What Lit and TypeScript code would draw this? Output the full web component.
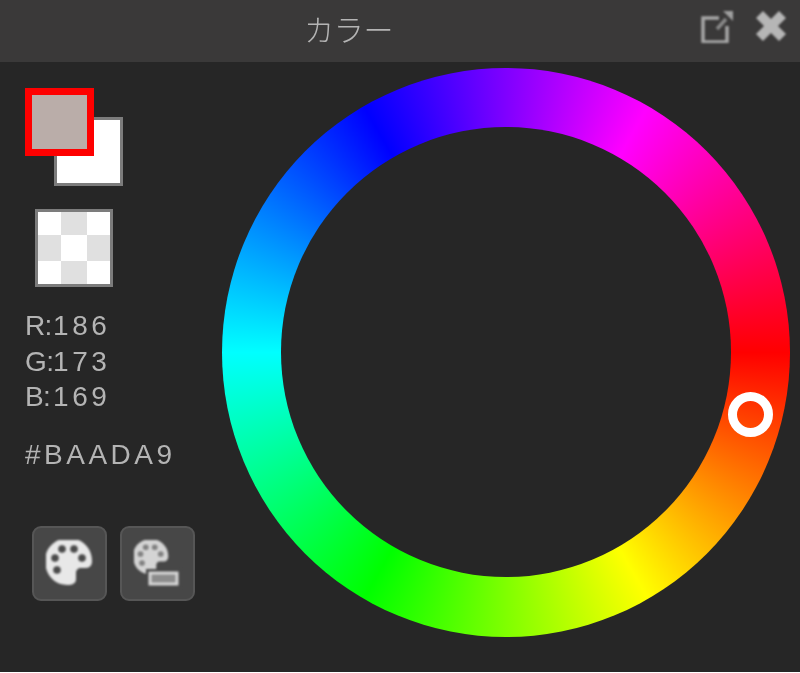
import { LitElement, html, css, svg } from "lit";
import { customElement } from "lit/decorators.js";

@customElement("app-root")
export class AppRoot extends LitElement {
  static styles = css`
    :host { display: block; width: 800px; height: 673px; background: #fff; overflow: hidden; }
    .panel { width: 800px; height: 672px; background: #262626; display: flex; flex-direction: column; font-family: "Liberation Sans", sans-serif; }
    .header { height: 62px; flex: none; background: #3a3939; display: flex; align-items: center; padding-left: 304px; box-sizing: border-box; }
    .title { font-family: "Noto Sans CJK JP", sans-serif; font-size: 30px; font-weight: 300; color: #b4b4b4; letter-spacing: -0.2px; flex: 1; line-height: 56px; height: 56px; margin-top: -7px; filter: blur(0.3px); }
    .hicons { display: flex; gap: 22px; margin-right: 13px; margin-top: -10px; filter: blur(0.8px); }
    .body { flex: 1; display: flex; min-height: 0; }
    .left { width: 222px; flex: none; box-sizing: border-box; padding: 26px 0 0 25px; display: flex; flex-direction: column; }
    .stack { position: relative; width: 98px; height: 98px; }
    .bg { position: absolute; left: 29px; top: 29px; width: 69px; height: 69px; box-sizing: border-box; background: #fff; border: 3px solid #7c7c7c; }
    .fg { position: absolute; left: 0; top: 0; width: 69px; height: 68px; box-sizing: border-box; background: #baada9; border: 7px solid #fe0000; }
    .checker { margin: 23px 0 0 10px; width: 78px; height: 78px; box-sizing: border-box; border: 3px solid #7c7c7c; display: grid; grid-template-columns: 23px 26px 23px; grid-template-rows: 23px 26px 23px; }
    .w { background: #fff; }
    .g { background: #e0e0e0; }
    .rgb { margin-top: 21px; font-size: 28px; color: #b4b4b4; height: 107px; filter: blur(0.3px); }
    .rgb div { height: 35.5px; line-height: 35.5px; white-space: nowrap; display: flex; }
    .l { width: 28px; flex: none; letter-spacing: -0.6px; }
    .d { letter-spacing: 3.6px; }
    .hex { margin-top: 23px; font-size: 28px; line-height: 34px; letter-spacing: 3.5px; color: #b4b4b4; filter: blur(0.3px); white-space: nowrap; }
    .buttons { margin: 54px 0 0 7px; display: flex; gap: 13px; }
    .btn { width: 75px; height: 75px; box-sizing: border-box; background: #474747; border: 2px solid #565656; border-radius: 9px; display: flex; align-items: center; justify-content: center; }
    .btn svg { filter: blur(0.8px); }
    .right { flex: 1; padding-top: 6px; }
    .wheel { position: relative; width: 568px; height: 569px; border-radius: 50%; background: conic-gradient(from 90deg, #f00, #ff0, #0f0, #0ff, #00f, #f0f, #f00); }
    .hole { position: absolute; left: 59px; top: 59px; width: 450px; height: 450px; border-radius: 50%; background: #262626; }
    .marker { position: absolute; left: 506px; top: 324px; width: 45px; height: 45px; box-sizing: border-box; border-radius: 50%; border: 9.5px solid #fff; filter: blur(0.7px); }
  `;

  palette(fill: string, holeFill: string) {
    return svg`<path fill="${fill}" d="M24 0C10 0 0 10 0 23c0 13 9 24 22 24 6 0 9-2 9-6v-6c0-3 2-5 5-5h5c4 0 6-3 6-7C47 10 37 0 24 0z"/>
      <circle cx="17" cy="11" r="3.8" fill="${holeFill}"/><circle cx="29" cy="11" r="3.8" fill="${holeFill}"/>
      <circle cx="10" cy="20" r="3.8" fill="${holeFill}"/><circle cx="37" cy="20" r="3.8" fill="${holeFill}"/>
      <circle cx="12" cy="32" r="3.8" fill="${holeFill}"/>`;
  }

  render() {
    const cells = ["w", "g", "w", "g", "w", "g", "w", "g", "w"];
    return html`
      <div class="panel">
        <div class="header">
          <div class="title">カラー</div>
          <div class="hicons">
            <svg width="32" height="33" viewBox="0 0 32 33" fill="none">
              <path d="M18 8H2v24h24V16" stroke="#a8a8a8" stroke-width="3.5"/>
              <path d="M16 19 25 9" stroke="#8a8a8a" stroke-width="3.5"/>
              <path d="M22 1h10v10z" fill="#a0a0a0"/>
            </svg>
            <svg width="32" height="32" viewBox="0 0 32 32">
              <path d="M8 1 16 9l8-8 7 7-8 8 8 8-7 7-8-8-8 8-7-7 8-8-8-8z" fill="#b6b6b6"/>
            </svg>
          </div>
        </div>
        <div class="body">
          <div class="left">
            <div class="stack"><div class="bg"></div><div class="fg"></div></div>
            <div class="checker">${cells.map((c) => html`<div class="${c}"></div>`)}</div>
            <div class="rgb">
              <div><span class="l">R:</span><span class="d">186</span></div>
              <div><span class="l">G:</span><span class="d">173</span></div>
              <div><span class="l">B:</span><span class="d">169</span></div>
            </div>
            <div class="hex">#BAADA9</div>
            <div class="buttons">
              <div class="btn">
                <svg width="48" height="47" viewBox="1 2 48 47">${this.palette("#e8e8e8", "#4a4a4a")}</svg>
              </div>
              <div class="btn">
                <svg width="48" height="48" viewBox="1 0 48 48">
                  <g transform="translate(0 -1) scale(.75)">${this.palette("#d4d4d4", "#808080")}</g>
                  <rect x="13" y="29" width="35" height="20" fill="#474747"/>
                  <rect x="17" y="33" width="27" height="11" fill="#8c8c8c" stroke="#d8d8d8" stroke-width="3"/>
                </svg>
              </div>
            </div>
          </div>
          <div class="right">
            <div class="wheel"><div class="hole"></div><div class="marker"></div></div>
          </div>
        </div>
      </div>
    `;
  }
}
